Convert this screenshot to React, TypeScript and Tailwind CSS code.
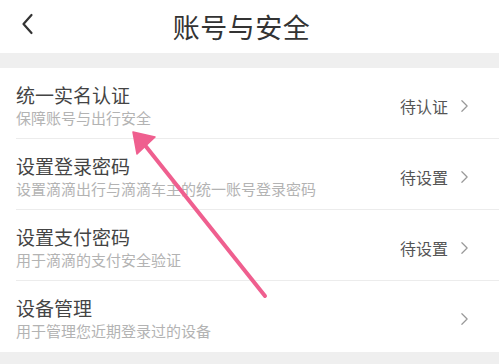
const rows = [
  { title: "统一实名认证", sub: "保障账号与出行安全", status: "待认证" },
  { title: "设置登录密码", sub: "设置滴滴出行与滴滴车主的统一账号登录密码", status: "待设置" },
  { title: "设置支付密码", sub: "用于滴滴的支付安全验证", status: "待设置" },
  { title: "设备管理", sub: "用于管理您近期登录过的设备", status: "" },
];

function Chevron({ className }: { className?: string }) {
  return (
    <svg viewBox="0 0 10 16" className={className} fill="none">
      <path d="M2 2l6 6-6 6" stroke="currentColor" strokeWidth="1.4" strokeLinecap="round" strokeLinejoin="round" />
    </svg>
  );
}

export default function App() {
  return (
    <div
      className="relative w-[499px] h-[364px] overflow-hidden bg-[#efefef]"
      style={{ fontFamily: '"Noto Sans CJK SC", "Noto Sans", sans-serif' }}
    >
      {/* Header */}
      <div className="relative h-[53px] bg-white flex items-center justify-center pr-[16px]">
        <svg viewBox="0 0 12 22" className="absolute left-[21px] top-[13px] w-[13px] h-[22px] text-[#333]" fill="none">
          <path d="M10 2L2 11l8 9" stroke="currentColor" strokeWidth="2.2" strokeLinecap="round" strokeLinejoin="round" />
        </svg>
        <h1 className="text-[27px] leading-none text-[#333] tracking-[0.5px] -mt-[1px]">账号与安全</h1>
      </div>

      <div className="h-[15px]" />

      {/* List */}
      <div className="bg-white">
        {rows.map((r, i) => (
          <div key={r.title} className="pl-4">
            <div
              className={`h-[71px] pt-[15px] pb-[10px] pr-[30px] flex items-center justify-between ${
                i < rows.length - 1 ? "border-b border-[#ececec]" : ""
              }`}
            >
              <div className="flex flex-col">
                <span className="text-[19px] leading-[24px] text-[#444]">{r.title}</span>
                <span className="text-[15px] leading-[22px] text-[#b3b3b3]">{r.sub}</span>
              </div>
              <div className="flex items-center gap-[12px]">
                {r.status && <span className="text-[16px] text-[#555]">{r.status}</span>}
                <Chevron className="w-[9px] h-[14px] text-[#999]" />
              </div>
            </div>
          </div>
        ))}
      </div>

      {/* Annotation arrow */}
      <svg className="absolute left-0 top-0 w-[499px] h-[364px] pointer-events-none" viewBox="0 0 499 364">
        <line x1="265" y1="296" x2="140" y2="139" stroke="#ef5f8f" strokeWidth="4" strokeLinecap="round" />
        <path d="M133 132 L155 137 L137 154 Z" fill="#ef5f8f" stroke="#ef5f8f" strokeWidth="1.5" strokeLinejoin="round" />
      </svg>
    </div>
  );
}
